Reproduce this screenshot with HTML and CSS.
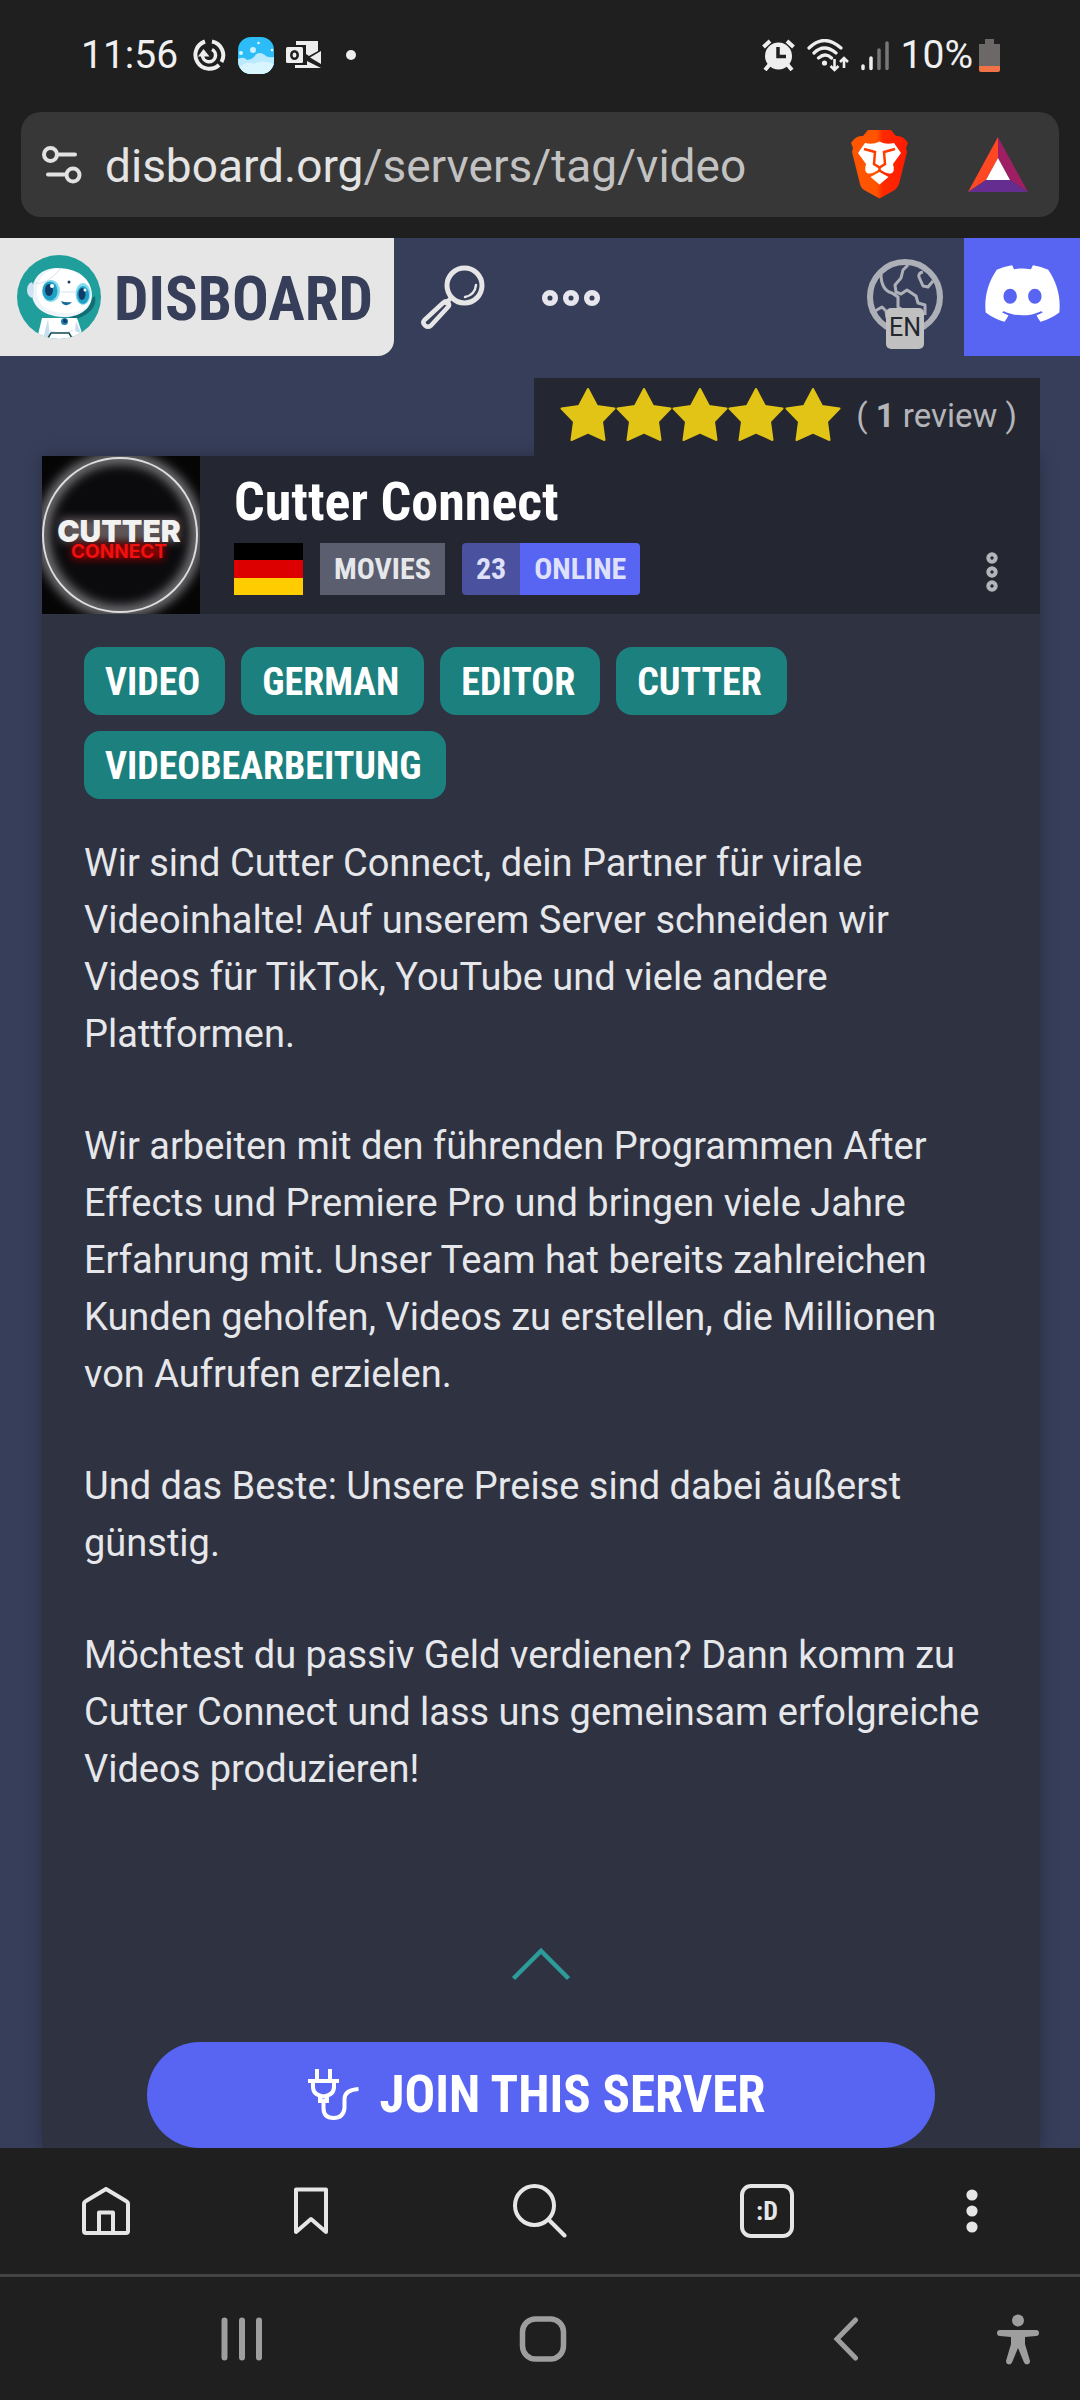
FILE: index.html
```html
<!DOCTYPE html>
<html lang="en">
<head>
<meta charset="utf-8">
<meta name="viewport" content="width=device-width, initial-scale=1">
<title>DISBOARD – video servers</title>
<link rel="stylesheet" href="styles.css">
</head>
<body>
<div class="phone">

  <div class="status">
    <div class="status-left">
      <span class="status-text">11:56</span>
      <svg class="i-swirl" width="34" height="34" viewBox="0 0 34 34" fill="none" stroke="#eee" stroke-width="4"><path d="M13 3.500A14 14 0 1 0 27 27"/><path d="M20 3.500A14 14 0 0 1 29.500 24"/><path d="M20 11.500a6.500 6.500 0 1 1-9.500 6" stroke-width="3.500"/><path fill="#eee" stroke="none" d="M6 18.500 11.500 11l6 7.500z"/></svg>
      <svg width="36" height="37" viewBox="0 0 36 37"><defs><clipPath id="sky"><rect width="36" height="37" rx="13"/></clipPath></defs><g clip-path="url(#sky)"><path fill="#2cbdf8" d="M0 0h36v37H0z"/><path fill="#b9eafd" d="M0 22q6-3 9 1 4 0 7-3 4-7 11-2 2 3 9 2v17H0z"/><path fill="#d9f5ff" d="M0 31q9-8 16-4 8-5 20 0v10H0z"/><circle cx="15" cy="13" r="3" fill="#c8f0ff"/><circle cx="3" cy="16" r="2" fill="#d9f5ff"/><circle cx="20.500" cy="6" r="1.200" fill="#fff"/><circle cx="34" cy="13" r="1.200" fill="#fff"/></g></svg>
      <svg width="36" height="28" viewBox="0 0 36 28"><path fill="#eee" d="M10 0h22v10l-9 5-3-2V4H10zM35 10v13l-11-6.500zM9 24h12v-4l14 7H9z"/><rect y="6" width="17" height="16" rx="1.500" fill="#eee"/><ellipse cx="8.500" cy="14" rx="3.200" ry="3.800" fill="none" stroke="#1f1f1f" stroke-width="2.500"/></svg>
      <svg class="i-dot" width="10" height="10" viewBox="0 0 10 10"><circle cx="5" cy="5" r="5" fill="#eee"/></svg>
    </div>
    <div class="status-right">
      <svg width="33" height="32" viewBox="0 0 33 32"><circle cx="16.500" cy="17" r="13.500" fill="#eee"/><path stroke="#eee" stroke-width="4" d="M1.500 8 8 2M31.500 8 25 2M8 25l-5 6M25 25l5 6"/><path fill="none" stroke="#1f1f1f" stroke-width="3.500" d="M16 8v9.500h8"/></svg>
      <svg width="42" height="33" viewBox="0 0 42 33"><g fill="none" stroke="#eee" stroke-width="3.200" stroke-linecap="round"><path d="M2 9q15-15 32 0M7 14q10-10 22 0M11.500 19q7-6 13 0"/></g><circle cx="17.500" cy="24" r="2.600" fill="#eee"/><path fill="none" stroke="#eee" stroke-width="2.600" d="M27.500 20v11M23.500 27l4 4 4-4M37 29V19M33 23l4-4 4 4"/></svg>
      <svg width="28" height="31" viewBox="0 0 28 31"><path stroke="#eee" stroke-width="3.500" stroke-linecap="round" d="M2 26v2.500M10 18v10.500"/><path stroke="#777" stroke-width="3.500" stroke-linecap="round" d="M18 10v18.500M26 3v25.500"/></svg>
      <span class="status-text">10%</span>
      <svg class="i-battery" width="21" height="33" viewBox="0 0 21 33"><path fill="#6b6867" d="M6 0h9v5h6v22H0V5h6z"/><path fill="#f07247" d="M0 27h21v4q0 2-2 2H2q-2 0-2-2z"/></svg>
    </div>
  </div>

  <div class="address">
    <button class="icon-btn" aria-label="Site settings"><svg width="40" height="38" viewBox="0 0 40 38" fill="none" stroke="#e2e2e2" stroke-width="4" stroke-linecap="round"><circle cx="8.500" cy="8.500" r="6.500"/><path d="M17 8.500h16M6 28.500h16"/><circle cx="31" cy="29" r="6.500"/></svg></button>
    <button class="url">disboard.org<span>/servers/tag/video</span></button>
    <button class="icon-btn" aria-label="Brave Shields"><svg width="57" height="69" viewBox="0 0 57 69"><defs><linearGradient id="br"><stop offset=".45" stop-color="#ff5500"/><stop offset=".55" stop-color="#ff2a00"/><stop offset="1" stop-color="#ff1a00"/></linearGradient></defs><path fill="url(#br)" d="M17 0h23l5 6q7-1 12 7l-2 5 1 4-8 32q-2 5-6 7l-13.500 7.500L15 61q-5-2-6-7L1 22l1-4-2-5q5-8 12-7z"/><path fill="#fff" d="M14 13q8 2 14.500-1.500Q35 15 43 13l7 10-8 11q2 7-1 9-4 2-12.500-4Q20 45 16 43q-3-2-1-9L7 23z"/><path fill="none" stroke="#ff3d00" stroke-width="2.500" d="m13 19 11 3-1 12 5.500 3.500L34 34l-1-12 11-3M28.500 37v3"/><path fill="#fff" d="m28.500 42 9 5-9 7.500-9-7.500z"/></svg></button>
    <button class="icon-btn i-bat" aria-label="Brave Rewards"><svg width="60" height="55" viewBox="0 0 60 55"><path fill="#ff4724" d="M30 0v21L18 43 0 55z"/><path fill="#9e1f63" d="M30 0v21l12 22 18 12z"/><path fill="#662d91" d="M0 55l18-12h24l18 12z"/><path fill="#fff" d="M30 21 42 43H18z"/></svg></button>
  </div>

  <main class="web">
    <header class="site">
      <a class="logo" href="#">
        <svg width="84" height="84" viewBox="0 0 84 84"><defs><clipPath id="rc"><circle cx="42" cy="42" r="42"/></clipPath></defs><g clip-path="url(#rc)"><path fill="#209e9c" d="M0 0h84v84H0z"/><path fill="#126e75" d="M78 41q3 14-16 22l-8 3-2-5z"/><path fill="#fff" d="M20 84l5-21h35l7 21z"/><path fill="#c7def1" d="M26 84l5-20 2 18zM59 66l-1 10 6 2z"/><path fill="#edf5fb" d="M15 39C15 19 28 13 41 13c23 0 34 14 34 27 0 17-18 23-29 22-22-1-31-13-31-23z"/><path fill="#fff" d="M20 37c0-15 10-23 22-23 22 0 32 13 32 25 0 16-15 20-27 19-20-1-27-11-27-21z"/><path fill="#cfe3f4" d="M15 27q-5 2-5 8t5 8q4-8 0-16z"/><ellipse cx="34" cy="36" rx="9" ry="11" fill="#83dceb"/><ellipse cx="33" cy="36" rx="7.500" ry="9.500" fill="#209fc6"/><ellipse cx="32" cy="35" rx="4" ry="6" fill="#103d68"/><circle cx="35" cy="31" r="2" fill="#fff"/><ellipse cx="66" cy="39" rx="7.500" ry="11" fill="#83dceb"/><ellipse cx="66" cy="40" rx="6" ry="9" fill="#209fc6"/><ellipse cx="65" cy="39" rx="3.500" ry="6" fill="#103d68"/><circle cx="68" cy="35" r="1.500" fill="#fff"/><circle cx="52" cy="27" r="1.500" fill="#263d60"/><path fill="#176a99" d="M44 46q5 2 11 1-3 4-7 3-3-1-4-4z"/><path fill="none" stroke="#d4e1ed" d="M16 28q14 3 27-14M44 37h14M33 76q15 4 23-1"/><circle cx="47.500" cy="66.500" r="3.500" fill="#247ea8"/><circle cx="48" cy="66" r="2" fill="#103d68"/><path fill="none" stroke="#174d54" stroke-width="1.500" d="m31 83 3-5h18l3 5"/></g></svg>
        <span class="wordmark">DISBOARD</span>
      </a>
      <button class="icon-btn i-find" aria-label="Search servers"><svg width="64" height="65" viewBox="0 0 64 65" fill="none" stroke="#e6e6e6" stroke-linecap="round" stroke-linejoin="round"><circle cx="43.500" cy="20.500" r="17.500" stroke-width="5"/><path stroke-width="2.500" d="M55 20q-1 10-11 12"/><path stroke-width="4.500" d="M30 33l-5 5"/><path stroke-width="4.500" d="M22.500 37.500q2.500-2.500 4.500 0 2 2.500 0 4.500L10 60.500q-3 2.500-6 0-3-3-.500-5.500z"/></svg></button>
      <button class="icon-btn i-more" aria-label="Menu"><svg width="60" height="18" viewBox="0 0 60 18" fill="none" stroke="#e6e6ec" stroke-width="5.500"><circle cx="9" cy="9" r="5.300"/><circle cx="30" cy="9" r="5.300"/><circle cx="51" cy="9" r="5.300"/></svg></button>
      <button class="lang" aria-label="Language"><svg width="76" height="76" viewBox="0 0 76 76" fill="none" stroke="#aeb0b8"><circle cx="38" cy="38" r="35" stroke-width="6"/><g stroke-width="3" stroke-linejoin="round"><path d="M14 15q0 16 11 19l6 4v10l6 4M41 6l-5 5-2 8-6 7 1 7 5 2 6-4 9 6 2 7 7 2v10M66 22l-5 6-5-1-4-9q-1-4 4-5M8 52l7-4 4 4 1 7"/></g></svg><span class="lang-code">EN</span></button>
      <a class="discord" href="#" aria-label="Log in with Discord"><svg width="75" height="57" viewBox="0 2.800 24 18.400"><path fill="#fff" d="M20.317 4.3698a19.7913 19.7913 0 00-4.8851-1.5152.0741.0741 0 00-.0785.0371c-.211.3753-.4447.8648-.6083 1.2495-1.8447-.2762-3.68-.2762-5.4868 0-.1636-.3933-.4058-.8742-.6177-1.2495a.077.077 0 00-.0785-.037 19.7363 19.7363 0 00-4.8852 1.515.0699.0699 0 00-.0321.0277C.5334 9.0458-.319 13.5799.0992 18.0578a.0824.0824 0 00.0312.0561c2.0528 1.5076 4.0413 2.4228 5.9929 3.0294a.0777.0777 0 00.0842-.0276c.4616-.6304.8731-1.2952 1.226-1.9942a.076.076 0 00-.0416-.1057c-.6528-.2476-1.2743-.5495-1.8722-.8923a.077.077 0 01-.0076-.1277c.1258-.0943.2517-.1923.3718-.2914a.0743.0743 0 01.0776-.0105c3.9278 1.7933 8.18 1.7933 12.0614 0a.0739.0739 0 01.0785.0095c.1202.099.246.1981.3728.2924a.077.077 0 01-.0066.1276 12.2986 12.2986 0 01-1.873.8914.0766.0766 0 00-.0407.1067c.3604.698.7719 1.3628 1.225 1.9932a.076.076 0 00.0842.0286c1.961-.6067 3.9495-1.5219 6.0023-3.0294a.077.077 0 00.0313-.0552c.5004-5.177-.8382-9.6739-3.5485-13.6604a.061.061 0 00-.0312-.0286zM8.02 15.3312c-1.1825 0-2.1569-1.0857-2.1569-2.419 0-1.3332.9555-2.4189 2.157-2.4189 1.2108 0 2.1757 1.0952 2.1568 2.419 0 1.3332-.9555 2.4189-2.1569 2.4189zm7.9748 0c-1.1825 0-2.1569-1.0857-2.1569-2.419 0-1.3332.9554-2.4189 2.1569-2.4189 1.2108 0 2.1757 1.0952 2.1568 2.419 0 1.3332-.946 2.4189-2.1568 2.4189Z"/></svg></a>
    </header>

    <article class="server">
      <a class="reviews" href="#">
        <svg width="281" height="56" viewBox="0 0 281 56" role="img" aria-label="5 stars"><defs><path id="st" d="M28 2 37 19 54.500 21.500 42 34.500 44.500 53 28 45.500 11.500 53 14 34.500 1.500 21.500 19 19z"/></defs><g fill="#e2c416" stroke="#e2c416" stroke-width="2" stroke-linejoin="round"><use href="#st"/><use href="#st" x="56"/><use href="#st" x="112"/><use href="#st" x="168"/><use href="#st" x="225"/></g></svg>
        <span>( <b>1</b> review )</span>
      </a>
      <div class="card">
        <div class="card-head">
          <svg class="avatar" width="158" height="158" viewBox="0 0 158 158" role="img" aria-label="Cutter Connect logo"><defs><filter id="g1" x="-20%" y="-20%" width="140%" height="140%"><feGaussianBlur stdDeviation="6"/></filter><filter id="g2" x="-20%" y="-50%" width="140%" height="200%"><feGaussianBlur stdDeviation="4"/></filter></defs><path fill="#050506" d="M0 0h158v158H0z"/><circle cx="78" cy="79" r="77" fill="#0b0a0d"/><circle cx="78" cy="79" r="77" fill="none" stroke="#a0a0a4" stroke-width="9" filter="url(#g1)"/><circle cx="78" cy="79" r="77" fill="none" stroke="#dcdcdc" stroke-width="2"/><path fill="#5d5557" d="M18 62h120v24H18z" filter="url(#g2)"/><path fill="#8c0000" d="M30 88h92v15H30z" filter="url(#g2)"/><text class="av-a" x="77" y="86" text-anchor="middle">CUTTER</text><text class="av-b" x="77" y="102" text-anchor="middle">CONNECT</text></svg>
          <div class="card-title">
            <h1>Cutter Connect</h1>
            <div class="meta">
              <svg class="flag" width="69" height="52" viewBox="0 0 69 52" role="img" aria-label="German"><path d="M0 0h69v17H0z"/><path fill="#d00" d="M0 17h69v18H0z"/><path fill="#fc0" d="M0 35h69v17H0z"/></svg>
              <a class="category" href="#">MOVIES</a>
              <span class="online"><span class="count">23</span><span class="label">ONLINE</span></span>
            </div>
          </div>
          <button class="icon-btn i-kebab" aria-label="Server options"><svg width="12" height="40" viewBox="0 0 12 40" fill="none" stroke="#b4b5b9" stroke-width="4"><circle cx="6" cy="6" r="3.700"/><circle cx="6" cy="20" r="3.700"/><circle cx="6" cy="34" r="3.700"/></svg></button>
        </div>
        <ul class="tags">
          <li><a href="#">VIDEO</a></li>
          <li><a href="#">GERMAN</a></li>
          <li><a href="#">EDITOR</a></li>
          <li><a href="#">CUTTER</a></li>
          <li><a href="#">VIDEOBEARBEITUNG</a></li>
        </ul>
        <div class="desc" lang="de">
          <p>Wir sind Cutter Connect, dein Partner für virale Videoinhalte! Auf unserem Server schneiden wir Videos für TikTok, YouTube und viele andere Plattformen.</p>
          <p>Wir arbeiten mit den führenden Programmen After Effects und Premiere Pro und bringen viele Jahre Erfahrung mit. Unser Team hat bereits zahlreichen Kunden geholfen, Videos zu erstellen, die Millionen von Aufrufen erzielen.</p>
          <p>Und das Beste: Unsere Preise sind dabei äußerst günstig.</p>
          <p>Möchtest du passiv Geld verdienen? Dann komm zu Cutter Connect und lass uns gemeinsam erfolgreiche Videos produzieren!</p>
        </div>
        <button class="collapse" aria-label="Show less"><svg width="60" height="34" viewBox="0 0 60 34" fill="none" stroke="#2c9b99" stroke-width="4.500"><path d="M2.500 31.500 30 4l27.500 27.500"/></svg></button>
        <a class="join" href="#"><svg width="52" height="52" viewBox="0 0 52 52" fill="none" stroke="#fff" stroke-width="4"><path d="M9 0v12M22 0v12M0 12h31M5 13v5q0 8 10.500 9.500Q26 26 26 18v-5M12 28v4h7v-4"/><path d="M15.500 32v7q0 10 10 10t11-10V30q0-9 14-10"/></svg><span>JOIN THIS SERVER</span></a>
      </div>
    </article>
  </main>

  <nav class="toolbar" aria-label="Browser">
    <button class="icon-btn" aria-label="Home"><svg width="48" height="48" viewBox="0 0 48 48" fill="none" stroke="#e6e6e6" stroke-width="4" stroke-linejoin="round"><path d="M24 2 44 14q2 1 2 3v27q0 2-2 2H4q-2 0-2-2V17q0-2 2-3zM17 46V25.500h14V46"/></svg></button>
    <button class="icon-btn" aria-label="Bookmarks"><svg width="34" height="48" viewBox="0 0 34 48" fill="none" stroke="#e6e6e6" stroke-width="4" stroke-linejoin="round"><path d="M2 2.500h30V45L17 32 2 45z"/></svg></button>
    <button class="icon-btn" aria-label="Search"><svg width="54" height="54" viewBox="0 0 54 54" fill="none" stroke="#e6e6e6" stroke-width="4" stroke-linecap="round"><circle cx="21.500" cy="21.500" r="19.500"/><path d="m36 36 15.500 15.500"/></svg></button>
    <button class="tabs" aria-label="Tabs">:D</button>
    <button class="icon-btn" aria-label="More"><svg width="12" height="44" viewBox="0 0 12 44" fill="#e6e6e6"><circle cx="6" cy="6" r="5.600"/><circle cx="6" cy="22" r="5.600"/><circle cx="6" cy="38" r="5.600"/></svg></button>
  </nav>
  <nav class="sysnav" aria-label="System">
    <button class="icon-btn" aria-label="Recents"><svg width="42" height="44" viewBox="0 0 42 44" stroke="#9e9e9e" stroke-width="6" stroke-linecap="round"><path d="M3.500 3.500v37M21 3.500v37M38 3.500v37"/></svg></button>
    <button class="icon-btn" aria-label="Home"><svg width="48" height="48" viewBox="0 0 48 48" fill="none" stroke="#9e9e9e" stroke-width="5.500"><rect x="3.500" y="4" width="41" height="40" rx="13"/></svg></button>
    <button class="icon-btn" aria-label="Back"><svg width="26" height="44" viewBox="0 0 26 44" fill="none" stroke="#9e9e9e" stroke-width="5" stroke-linecap="round"><path d="M22.500 3 4 22l18.500 19"/></svg></button>
    <button class="icon-btn" aria-label="Accessibility"><svg width="42" height="52" viewBox="0 0 42 52" fill="#9e9e9e"><circle cx="21" cy="7.500" r="6"/><path d="M3 17h36q3 0 3 3t-3 3l-11 1v7l5 17q0 3-3 3.500-2 0-3-2L21 35l-6 14.500q-1 2-3 2-3-.500-3-3.500l5-17v-7L3 23q-3 0-3-3t3-3z"/></svg></button>
  </nav>
</div>
</body>
</html>
```
FILE: styles.css
```css
* { box-sizing: border-box; }

body {
  margin: 0;
  background: #1f1f1f;
  color: #e6e7ea;
  font-family: Roboto, "Liberation Sans", sans-serif;
}

button {
  margin: 0;
  padding: 0;
  border: 0;
  background: none;
  color: inherit;
  font: inherit;
  cursor: pointer;
}

a { color: inherit; text-decoration: none; }
svg { display: block; flex: none; }
.icon-btn { display: flex; align-items: center; justify-content: center; }

.phone {
  display: flex;
  flex-direction: column;
  height: 100vh;
}

/* Android status bar */
.status {
  display: flex;
  justify-content: space-between;
  align-items: center;
  padding: 0 80px 2px 81px;
  height: 112px;
  flex: none;
}
.status-left, .status-right { display: flex; align-items: center; gap: 12px; }
.status-text { font-size: 39px; line-height: 48px; color: #f0f0f0; }
.i-swirl { margin-left: 2px; }
.i-dot { margin-left: 12px; }
.i-battery { margin-left: -6px; }

/* Address bar */
.address {
  display: flex;
  align-items: center;
  height: 105px;
  margin: 0 21px 21px;
  padding: 0 31px 0 21px;
  border-radius: 20px;
  background: #373737;
  flex: none;
}
.url {
  flex: 1;
  min-width: 0;
  margin-left: 23px;
  padding-top: 2px;
  text-align: left;
  white-space: nowrap;
  font-size: 46px;
  line-height: 60px;
  color: #e4e4e4;
}
.url span { color: #c2c2c2; }
.i-bat { margin-left: 60px; }

/* Web page */
.web {
  flex: 1;
  min-height: 0;
  overflow: hidden;
  background: #373e5a;
}
.site { display: flex; align-items: center; height: 118px; }
.logo {
  display: flex;
  align-items: center;
  gap: 13px;
  height: 100%;
  padding: 0 21px 0 17px;
  border-radius: 0 0 16px 0;
  background: #e6e6e6;
}
.wordmark {
  padding-top: 4px;
  font: bold 61px/72px "Roboto Condensed", Roboto, sans-serif;
  color: #373e5a;
}
.i-find { margin-left: 27px; }
.i-more { margin: 2px 0 0 56px; }
.lang { position: relative; margin: 0 21px 0 auto; }
.lang-code {
  position: absolute;
  left: 19px;
  top: 49px;
  width: 38px;
  height: 41px;
  border-radius: 5px;
  background: #c0c0c0;
  color: #24262e;
  font-size: 25px;
  line-height: 39px;
  text-align: center;
}
.discord {
  display: flex;
  align-items: center;
  justify-content: center;
  width: 116px;
  height: 100%;
  padding-bottom: 7px;
  background: #5865f2;
}

/* Server card */
.server {
  display: flex;
  flex-direction: column;
  padding: 22px 40px 0 42px;
}
.reviews {
  display: flex;
  align-items: center;
  gap: 15px;
  align-self: flex-end;
  height: 78px;
  padding: 0 23px 4px 26px;
  background: #242731;
  color: #b4b5b9;
  font-size: 33px;
  z-index: 1;
}
.card { background: #2f3241; box-shadow: 0 0 16px #0004; }
.card-head { display: flex; background: #242731; }
.card-title { flex: 1; padding: 16px 0 0 34px; }
h1 {
  margin: 0;
  font: bold 54px/60px "Roboto Condensed", Roboto, sans-serif;
  color: #fff;
}
.meta { display: flex; align-items: center; gap: 17px; margin-top: 11px; }
.category, .online {
  font: bold 30px/52px "Roboto Condensed", Roboto, sans-serif;
}
.category { padding: 0 14px; background: #5b5e6f; }
.online { display: flex; color: #dfe1fa; }
.count { padding: 0 14px; background: #4a519f; border-radius: 4px 0 0 4px; }
.label { padding: 0 14px; background: #5865f2; border-radius: 0 4px 4px 0; }
.i-kebab { padding: 74px 42px 0 0; }
.tags {
  display: flex;
  flex-wrap: wrap;
  gap: 16px;
  margin: 0;
  padding: 33px 42px 0;
  list-style: none;
}
.tags a {
  display: block;
  padding: 2px 25px 0 21px;
  border-radius: 16px;
  background: #1c807e;
  color: #fff;
  font: bold 38px/66px "Roboto Condensed", Roboto, sans-serif;
}
.desc {
  display: flex;
  flex-direction: column;
  gap: 55px;
  padding: 36px 42px 0;
  font-size: 38px;
  line-height: 57px;
}
.desc p { margin: 0; }
.collapse { display: block; margin: 149px auto 0; }
.join {
  display: flex;
  align-items: center;
  justify-content: center;
  gap: 19px;
  height: 106px;
  margin: 61px 105px 0;
  padding-right: 8px;
  border-radius: 53px;
  background: #5865f2;
  color: #fff;
  font: bold 51px/60px "Roboto Condensed", Roboto, sans-serif;
}
.av-a { font: 900 30px Inter, sans-serif; fill: #f2f2f2; }
.av-b { font: 700 19px Inter, sans-serif; fill: #f01010; }

/* Browser toolbar and system navigation */
.toolbar {
  display: grid;
  grid-template-columns: 212fr 198fr 260fr 194fr 216fr;
  align-items: center;
  justify-items: center;
  height: 126px;
  flex: none;
}
.tabs {
  width: 54px;
  height: 54px;
  border: 4px solid #e6e6e6;
  border-radius: 11px;
  color: #e6e6e6;
  font: bold 26px/46px "Roboto Condensed", Roboto, sans-serif;
}
.sysnav {
  display: grid;
  grid-template-columns: 301fr 302fr 303fr 42fr;
  align-items: center;
  justify-items: center;
  height: 126px;
  padding: 0 41px 0 91px;
  border-top: 3px solid #444;
  flex: none;
}
```
